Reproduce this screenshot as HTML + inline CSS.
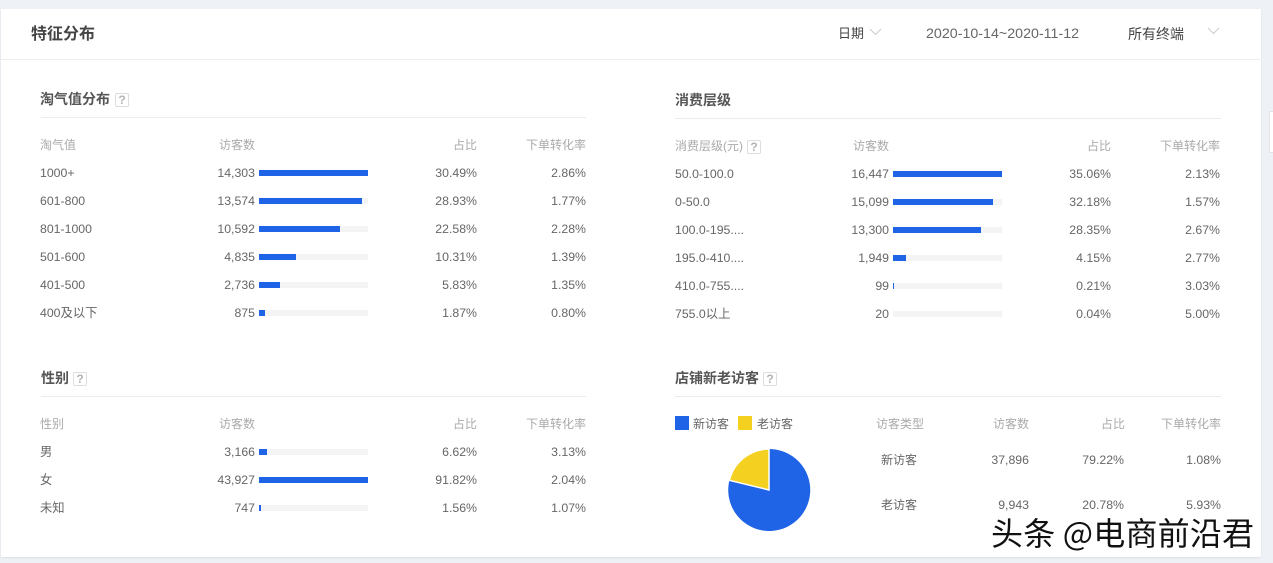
<!DOCTYPE html>
<html lang="zh"><head><meta charset="utf-8"><title>特征分布</title>
<style>
html,body{margin:0;padding:0;width:1273px;height:563px;overflow:hidden;background:#eef1f6}
body{position:relative;font-family:"Liberation Sans","Noto Sans CJK SC",sans-serif;font-size:12.3px;color:#666}
.card{position:absolute;left:1px;top:9px;width:1260px;height:548px;background:#fff;box-shadow:0 1px 2px rgba(0,0,0,.08)}
.a{position:absolute;white-space:nowrap;line-height:18px}
.hl{position:absolute;height:1px;background:#ececec}
.s{position:absolute;width:546px;height:0}
.s .a{top:-9px}
.v{right:331px}
.p{right:109px}
.c{right:0}
.n{left:0}
.o{left:1px}
.h{color:#aaa;font-size:12px}
.b{position:absolute;left:219px;top:-3px;width:109px;height:6px;background:#f4f4f4}
.b i{display:block;height:6px;background:#1f63e6}
.t{position:absolute;font-size:14px;font-weight:700;color:#555;line-height:18px;white-space:nowrap}
.q{position:absolute;width:12px;height:12px;border:1px solid #ddd;border-radius:2px;color:#b4b4b4;font-size:12px;line-height:12px;text-align:center;font-weight:700}
.wm{position:absolute;left:991px;top:512px;font-size:32px;letter-spacing:.2px;line-height:40px;color:#111;white-space:nowrap;text-shadow:1px 1px 0 #fff,-1px 0 0 #fff;font-family:"Noto Sans CJK SC","Liberation Sans",sans-serif;font-weight:400}
</style></head><body>
<div class="card"></div>
<div style="position:absolute;left:1269px;top:111px;width:6px;height:40px;background:#fff;border:1px solid #e4e4e4"></div>
<div class="a" style="left:31px;top:24px;font-size:16px;font-weight:700;color:#444;line-height:22px">特征分布</div>
<div class="hl" style="left:1px;top:59px;width:1260px;background:#eeeeee"></div>
<div class="a" style="left:838px;top:25px;font-size:13px;color:#444">日期</div>
<svg class="a" style="left:869px;top:28px" width="13" height="8"><path d="M1 1l5.500 5.500L12 1" fill="none" stroke="#ccc"/></svg>
<div class="a" style="left:926px;top:25px;font-size:14.250px;color:#666">2020-10-14~2020-11-12</div>
<div class="a" style="left:1128px;top:25px;font-size:14px;color:#444">所有终端</div>
<svg class="a" style="left:1207px;top:27px" width="13" height="8"><path d="M1 1l5.500 5.500L12 1" fill="none" stroke="#ccc"/></svg>

<div class="t" style="left:40px;top:90px">淘气值分布</div><div class="q" style="left:115px;top:93px">?</div>
<div class="hl" style="left:41px;top:117px;width:545px"></div>
<div class="s" style="left:40px;top:145px"><div class="a n h">淘气值</div><div class="a v h">访客数</div><div class="a p h">占比</div><div class="a c h">下单转化率</div></div>
<div class="s" style="left:40px;top:173px"><div class="a n">1000+</div><div class="a v">14,303</div><div class="b"><i style="width:109px"></i></div><div class="a p">30.49%</div><div class="a c">2.86%</div></div>
<div class="s" style="left:40px;top:201px"><div class="a n">601-800</div><div class="a v">13,574</div><div class="b"><i style="width:103px"></i></div><div class="a p">28.93%</div><div class="a c">1.77%</div></div>
<div class="s" style="left:40px;top:229px"><div class="a n">801-1000</div><div class="a v">10,592</div><div class="b"><i style="width:81px"></i></div><div class="a p">22.58%</div><div class="a c">2.28%</div></div>
<div class="s" style="left:40px;top:257px"><div class="a n">501-600</div><div class="a v">4,835</div><div class="b"><i style="width:37px"></i></div><div class="a p">10.31%</div><div class="a c">1.39%</div></div>
<div class="s" style="left:40px;top:285px"><div class="a n">401-500</div><div class="a v">2,736</div><div class="b"><i style="width:21px"></i></div><div class="a p">5.83%</div><div class="a c">1.35%</div></div>
<div class="s" style="left:40px;top:313px"><div class="a n">400及以下</div><div class="a v">875</div><div class="b"><i style="width:6px"></i></div><div class="a p">1.87%</div><div class="a c">0.80%</div></div>

<div class="t" style="left:675px;top:91px">消费层级</div>
<div class="hl" style="left:675px;top:118px;width:546px"></div>
<div class="s" style="left:674px;top:146px"><div class="a o h">消费层级(元)</div><div class="a v h">访客数</div><div class="a p h">占比</div><div class="a c h">下单转化率</div></div>
<div class="q" style="left:747px;top:140px">?</div>
<div class="s" style="left:674px;top:174px"><div class="a o">50.0-100.0</div><div class="a v">16,447</div><div class="b"><i style="width:109px"></i></div><div class="a p">35.06%</div><div class="a c">2.13%</div></div>
<div class="s" style="left:674px;top:202px"><div class="a o">0-50.0</div><div class="a v">15,099</div><div class="b"><i style="width:100px"></i></div><div class="a p">32.18%</div><div class="a c">1.57%</div></div>
<div class="s" style="left:674px;top:230px"><div class="a o">100.0-195....</div><div class="a v">13,300</div><div class="b"><i style="width:88px"></i></div><div class="a p">28.35%</div><div class="a c">2.67%</div></div>
<div class="s" style="left:674px;top:258px"><div class="a o">195.0-410....</div><div class="a v">1,949</div><div class="b"><i style="width:13px"></i></div><div class="a p">4.15%</div><div class="a c">2.77%</div></div>
<div class="s" style="left:674px;top:286px"><div class="a o">410.0-755....</div><div class="a v">99</div><div class="b"><i style="width:1px"></i></div><div class="a p">0.21%</div><div class="a c">3.03%</div></div>
<div class="s" style="left:674px;top:314px"><div class="a o">755.0以上</div><div class="a v">20</div><div class="b"><i style="width:0"></i></div><div class="a p">0.04%</div><div class="a c">5.00%</div></div>

<div class="t" style="left:41px;top:369px">性别</div><div class="q" style="left:73px;top:372px">?</div>
<div class="hl" style="left:41px;top:396px;width:545px"></div>
<div class="s" style="left:40px;top:424px"><div class="a n h">性别</div><div class="a v h">访客数</div><div class="a p h">占比</div><div class="a c h">下单转化率</div></div>
<div class="s" style="left:40px;top:452px"><div class="a n">男</div><div class="a v">3,166</div><div class="b"><i style="width:8px"></i></div><div class="a p">6.62%</div><div class="a c">3.13%</div></div>
<div class="s" style="left:40px;top:480px"><div class="a n">女</div><div class="a v">43,927</div><div class="b"><i style="width:109px"></i></div><div class="a p">91.82%</div><div class="a c">2.04%</div></div>
<div class="s" style="left:40px;top:508px"><div class="a n">未知</div><div class="a v">747</div><div class="b"><i style="width:2px"></i></div><div class="a p">1.56%</div><div class="a c">1.07%</div></div>

<div class="t" style="left:675px;top:369px">店铺新老访客</div><div class="q" style="left:763px;top:372px">?</div>
<div class="hl" style="left:675px;top:396px;width:546px"></div>
<div style="position:absolute;left:675px;top:416px;width:14px;height:14px;background:#1f63e6"></div>
<div class="a" style="left:693px;top:415px;font-size:12px">新访客</div>
<div style="position:absolute;left:738px;top:416px;width:14px;height:14px;background:#f4d020"></div>
<div class="a" style="left:757px;top:415px;font-size:12px">老访客</div>
<svg style="position:absolute;left:720px;top:441px" width="100" height="100" viewBox="0 0 100 100">
<path d="M49 49L49 8A41 41 0 1 1 9.400 39.300Z" fill="#1f63e6"/>
<path d="M49 49L9.400 39.300A41 41 0 0 1 49 8Z" fill="#f4d020" stroke="#fff" stroke-width="1.500"/>
</svg>
<div class="a h" style="left:876px;top:415px">访客类型</div>
<div class="a h" style="right:244px;top:415px">访客数</div>
<div class="a h" style="right:148px;top:415px">占比</div>
<div class="a h" style="right:52px;top:415px">下单转化率</div>
<div class="a" style="left:881px;top:451px;font-size:12px">新访客</div>
<div class="a" style="right:244px;top:451px">37,896</div>
<div class="a" style="right:149px;top:451px">79.22%</div>
<div class="a" style="right:52px;top:451px">1.08%</div>
<div class="a" style="left:881px;top:496px;font-size:12px">老访客</div>
<div class="a" style="right:244px;top:496px">9,943</div>
<div class="a" style="right:149px;top:496px">20.78%</div>
<div class="a" style="right:52px;top:496px">5.93%</div>
<div class="wm">头条 @电商前沿君</div>
</body></html>
